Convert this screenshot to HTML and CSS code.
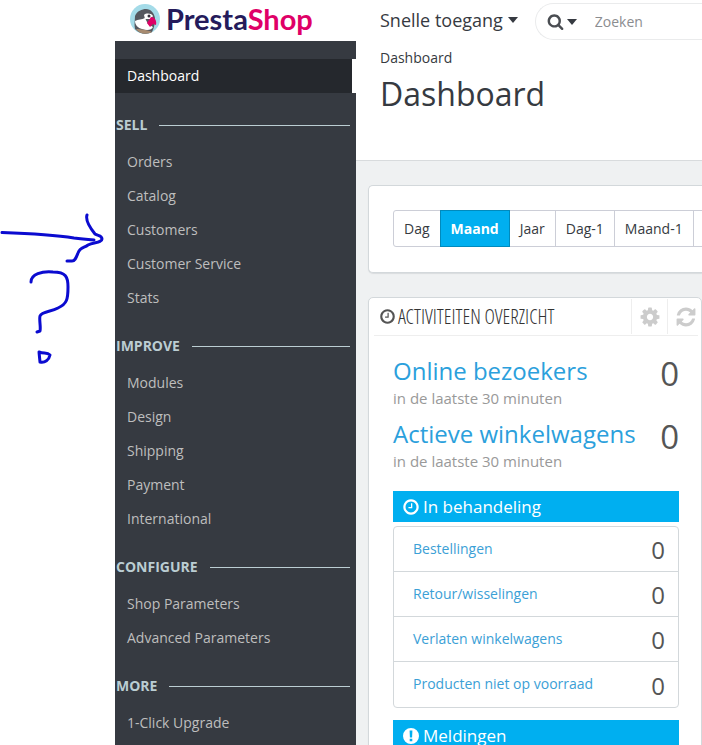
FILE: index.html
```html
<!DOCTYPE html>
<html lang="nl">
<head>
    <meta charset="UTF-8">
    <meta name="viewport" content="width=device-width, initial-scale=1.0">
    <title>Dashboard - PrestaShop</title>
    <link rel="stylesheet" href="styles.css">
</head>
<body>
    <!-- Pen notes next to the menu -->
    <aside class="notes">
        <svg class="pen" width="115" height="160" viewBox="0 210 115 160" aria-hidden="true">
            <path d="M2 232.500C30 233.500 55 235 74 238C82 239 88 239.500 94 240"/>
            <path d="M87 215C85 221 91 229 95 234C98 236 102 235 102 239C102 243 93 242 88 245C84 248 80 247 78 253C76 258 75 261 72 261H67"/>
            <path d="M31 282C31 274 42 271 53 272C66 272 68 277 68 287C68 299 67 304 58 308C51 312 42 311 40 316C39 320 41 327 40 331L37 332"/>
            <path d="M39 352L40 362C45 363 49 360 50 355C47 352 44 354 39 352"/>
        </svg>
    </aside>

    <nav class="sidebar">
        <a class="logo" href="#">
            <svg width="30" height="30" viewBox="0 0 30 30" aria-hidden="true">
                <circle cx="15" cy="15" r="15" fill="#a4dbe8"/>
                <path d="M5 25C4 20 5 16 5 12C7 7 12 5 16 5C21 5 24 9 25 14C25 20 24 24 22 28C17 31 9 30 5 25Z" fill="#55585f"/>
                <path d="M5 17C8 15 12 16 15 14L18 20L23 23C22 26 17 27 12 25C8 24 5 21 5 17Z" fill="#fff"/>
                <path d="M14 11C16 9 21 9 23 12L21 15L15 15Z" fill="#fff"/>
                <circle cx="19" cy="12" r="1.500" fill="#35303c"/>
                <path d="M21 13C25 13 27 17 26 21L23 20L20 23L17 19Z" fill="#df0067"/>
                <path d="M6 25C11 25 18 26 22 28C17 31 9 30 6 25Z" fill="#a78b70"/>
            </svg>
            <span class="logo-text">Presta<span class="logo-shop">Shop</span></span>
        </a>

        <div class="menu">
            <a class="menu-item active" href="#">Dashboard</a>

            <h2 class="menu-title">SELL</h2>
            <a class="menu-item" href="#">Orders</a>
            <a class="menu-item" href="#">Catalog</a>
            <a class="menu-item" href="#">Customers</a>
            <a class="menu-item" href="#">Customer Service</a>
            <a class="menu-item" href="#">Stats</a>

            <h2 class="menu-title">IMPROVE</h2>
            <a class="menu-item" href="#">Modules</a>
            <a class="menu-item" href="#">Design</a>
            <a class="menu-item" href="#">Shipping</a>
            <a class="menu-item" href="#">Payment</a>
            <a class="menu-item" href="#">International</a>

            <h2 class="menu-title">CONFIGURE</h2>
            <a class="menu-item" href="#">Shop Parameters</a>
            <a class="menu-item" href="#">Advanced Parameters</a>

            <h2 class="menu-title">MORE</h2>
            <a class="menu-item" href="#">1-Click Upgrade</a>
        </div>
    </nav>

    <main class="main">
        <header class="header">
            <div class="topbar">
                <button class="quick" type="button">Snelle toegang <span class="caret"></span></button>
                <form class="search">
                    <button class="search-type" type="button" aria-label="Zoeken in">
                        <svg width="17" height="17" viewBox="0 0 1792 1792"><path d="M1216 832q0-185-131.500-316.500t-316.500-131.500-316.500 131.500-131.500 316.500 131.500 316.500 316.500 131.500 316.500-131.500 131.500-316.500zm512 832q0 52-38 90t-90 38q-54 0-90-38l-343-342q-179 124-399 124-143 0-273.500-55.500t-225-150-150-225-55.500-273.500 55.500-273.500 150-225 225-150 273.500-55.500 273.500 55.500 225 150 150 225 55.500 273.500q0 220-124 399l343 343q37 37 37 90z"/></svg>
                        <span class="caret"></span>
                    </button>
                    <input class="search-input" type="text" placeholder="Zoeken" aria-label="Zoeken">
                </form>
            </div>
            <div class="breadcrumb">Dashboard</div>
            <h1 class="page-title">Dashboard</h1>
        </header>

        <div class="content">
            <section class="panel calendar">
                <div class="btn-group">
                    <button class="btn" type="button">Dag</button>
                    <button class="btn selected" type="button">Maand</button>
                    <button class="btn" type="button">Jaar</button>
                    <button class="btn" type="button">Dag-1</button>
                    <button class="btn" type="button">Maand-1</button>
                    <span class="btn-rest"></span>
                </div>
            </section>

            <section class="panel activity">
                <div class="panel-heading">
                    <svg class="icon" width="17" height="17" viewBox="0 0 1792 1792"><path d="M1024 544v448q0 14-9 23t-23 9h-320q-14 0-23-9t-9-23v-64q0-14 9-23t23-9h224v-352q0-14 9-23t23-9h64q14 0 23 9t9 23zm416 352q0-148-73-273t-198-198-273-73-273 73-198 198-73 273 73 273 198 198 273 73 273-73 198-198 73-273zm224 0q0 209-103 385.500t-279.500 279.500-385.500 103-385.500-103-279.500-279.500-103-385.500 103-385.500 279.500-279.500 385.500-103 385.500 103 279.500 279.500 103 385.500z"/></svg>
                    <h3>ACTIVITEITEN OVERZICHT</h3>
                    <button class="tool" type="button" aria-label="Instellingen">
                        <svg width="22" height="22" viewBox="0 0 1792 1792"><path d="M1152 896q0-106-75-181t-181-75-181 75-75 181 75 181 181 75 181-75 75-181zm512-109v222q0 12-8 23t-20 13l-185 28q-19 54-39 91 35 50 107 138 10 12 10 25t-9 23q-27 37-99 108t-94 71q-12 0-26-9l-138-108q-44 23-91 38-16 136-29 186-7 28-36 28h-222q-14 0-24.500-8.500t-11.500-21.500l-28-184q-49-16-90-37l-141 107q-10 9-25 9-14 0-25-11-126-114-165-168-7-10-7-23 0-12 8-23 15-21 51-66.500t54-70.500q-27-50-41-99l-183-27q-13-2-21-12.500t-8-23.500v-222q0-12 8-23t19-13l186-28q14-46 39-92-40-57-107-138-10-12-10-24 0-10 9-23 26-36 98.500-107.500t94.500-71.500q13 0 26 10l138 107q44-23 91-38 16-136 29-186 7-28 36-28h222q14 0 24.500 8.500t11.500 21.500l28 184q49 16 90 37l142-107q9-9 24-9 13 0 25 10 129 119 165 170 7 8 7 22 0 12-8 23-15 21-51 66.500t-54 70.500q26 50 41 98l183 28q13 2 21 12.500t8 23.500z"/></svg>
                    </button>
                    <button class="tool" type="button" aria-label="Vernieuwen">
                        <svg width="22" height="22" viewBox="0 0 1792 1792"><path d="M1639 1056q0 5-1 7-64 268-268 434.500t-478 166.500q-146 0-282.500-55t-243.500-157l-129 129q-19 19-45 19t-45-19-19-45v-448q0-26 19-45t45-19h448q26 0 45 19t19 45-19 45l-137 137q71 66 161 102t187 36q134 0 250-65t186-179q11-17 53-117 8-23 30-23h192q13 0 22.500 9.500t9.500 22.500zm25-800v448q0 26-19 45t-45 19h-448q-26 0-45-19t-19-45 19-45l138-138q-148-137-349-137-134 0-250 65t-186 179q-11 17-53 117-8 23-30 23h-199q-13 0-22.500-9.500t-9.500-22.500v-7q65-268 270-434.500t480-166.500q146 0 284 55.500t245 156.500l130-129q19-19 45-19t45 19 19 45z"/></svg>
                    </button>
                </div>

                <div class="panel-body">
                    <div class="stat">
                        <div>
                            <a class="stat-label" href="#">Online bezoekers</a>
                            <small>in de laatste 30 minuten</small>
                        </div>
                        <span class="stat-value">0</span>
                    </div>
                    <div class="stat">
                        <div>
                            <a class="stat-label" href="#">Actieve winkelwagens</a>
                            <small>in de laatste 30 minuten</small>
                        </div>
                        <span class="stat-value">0</span>
                    </div>

                    <h4 class="list-title">
                        <svg class="icon" width="18" height="18" viewBox="0 0 1792 1792"><path d="M1024 544v448q0 14-9 23t-23 9h-320q-14 0-23-9t-9-23v-64q0-14 9-23t23-9h224v-352q0-14 9-23t23-9h64q14 0 23 9t9 23zm416 352q0-148-73-273t-198-198-273-73-273 73-198 198-73 273 73 273 198 198 273 73 273-73 198-198 73-273zm224 0q0 209-103 385.500t-279.500 279.500-385.500 103-385.500-103-279.500-279.500-103-385.500 103-385.500 279.500-279.500 385.500-103 385.500 103 279.500 279.500 103 385.500z"/></svg>
                        In behandeling
                    </h4>
                    <ul class="list">
                        <li><a href="#">Bestellingen</a><span>0</span></li>
                        <li><a href="#">Retour/wisselingen</a><span>0</span></li>
                        <li><a href="#">Verlaten winkelwagens</a><span>0</span></li>
                        <li><a href="#">Producten niet op voorraad</a><span>0</span></li>
                    </ul>

                    <h4 class="list-title">
                        <svg class="icon" width="18" height="18" viewBox="0 0 18 18"><path fill-rule="evenodd" d="M9 1a8 8 0 1 0 0 16a8 8 0 1 0 0-16zM7.600 3.600h2.800l-.3 6.800H7.900zM7.700 11.800h2.600v2.500H7.700z"/></svg>
                        Meldingen
                    </h4>
                </div>
            </section>
        </div>
    </main>
</body>
</html>
```
FILE: styles.css
```css
* {
    box-sizing: border-box;
}
body {
    display: flex;
    height: 100vh;
    margin: 0;
    overflow: hidden;
    background: white;
    font-family: "Open Sans", "Noto Sans", sans-serif;
    font-size: 14px;
    color: #363a41;
}
h1, h2, h3, h4, ul {
    margin: 0;
    padding: 0;
    font-weight: 400;
}
a {
    text-decoration: none;
}
button {
    font-family: inherit;
    color: inherit;
    background: none;
    border: none;
    padding: 0;
    cursor: pointer;
}
svg {
    display: block;
    flex: none;
    fill: currentColor;
}

/* Pen notes */
.notes {
    flex: none;
    padding-top: 210px;
}
.pen {
    fill: none;
    stroke: #0b0bd0;
    stroke-width: 3;
    stroke-linecap: round;
    stroke-linejoin: round;
}

/* Sidebar */
.sidebar {
    display: flex;
    flex: none;
    flex-direction: column;
    width: 241px;
}
.logo {
    display: flex;
    flex: none;
    align-items: center;
    gap: 6px;
    height: 41px;
    padding: 0 0 4px 15px;
}
.logo-text {
    font-family: Lato, sans-serif;
    font-size: 29px;
    font-weight: 700;
    line-height: 36px;
    color: #251b5b;
}
.logo-shop {
    color: #df0067;
}
.menu {
    flex: 1;
    padding-top: 18px;
    background: #363a41;
}
.menu-item {
    display: block;
    padding-left: 12px;
    line-height: 34px;
    color: #bebebe;
}
.menu-item.active {
    margin-bottom: 22px;
    border-right: 4px solid white;
    background: #25282d;
    color: white;
}
.menu-title {
    display: flex;
    align-items: center;
    gap: 12px;
    margin: 21px 6px 10px 1px;
    font-size: 14px;
    font-weight: 700;
    line-height: 20px;
    color: #bbcdd2;
}
.menu-title::after {
    content: "";
    flex: 1;
    height: 1px;
    background: #bbcdd2;
}

/* Header */
.main {
    flex: 1;
    min-width: 0;
    overflow: hidden;
    background: #eff1f2;
}
.header {
    height: 161px;
    padding: 3px 0 0 24px;
    border-bottom: 1px solid #d8dbdd;
    background: white;
}
.topbar {
    display: flex;
    gap: 17px;
}
.quick {
    display: flex;
    flex: none;
    align-items: center;
    gap: 5px;
    height: 33px;
    font-size: 18px;
}
.caret {
    border: 5px solid transparent;
    border-top: 6px solid #363a41;
    border-bottom: 0;
}
.search {
    display: flex;
    flex: 1;
    align-items: center;
    gap: 18px;
    min-width: 0;
    height: 37px;
    padding-left: 11px;
    border: 1px solid #eaebec;
    border-right: 0;
    border-radius: 19px 0 0 19px;
}
.search-type {
    display: flex;
    align-items: center;
    gap: 3px;
    color: #4a4d52;
}
.search-input {
    flex: 1;
    min-width: 0;
    padding: 0;
    border: none;
    outline: none;
    background: none;
    font: inherit;
}
.search-input::placeholder {
    color: #8b8d90;
}
.breadcrumb {
    padding-top: 8px;
    line-height: 20px;
}
.page-title {
    padding-top: 4px;
    font-size: 32px;
    line-height: 44px;
}

/* Panels */
.content {
    padding: 24px 0 0 12px;
}
.panel {
    margin-bottom: 24px;
    border: 1px solid #d3d8db;
    border-radius: 5px;
    background: white;
    box-shadow: 0 1px 1px #d9dcde;
}
.calendar {
    padding: 24px 0 25px 24px;
    border-right: 0;
    border-radius: 5px 0 0 5px;
    overflow: hidden;
}
.btn-group {
    display: flex;
}
.btn {
    flex: none;
    height: 37px;
    margin-left: -1px;
    padding: 0 10px;
    border: 1px solid #ccced7;
    background: white;
    font-size: 14px;
}
.btn:first-child {
    margin-left: 0;
    border-radius: 3px 0 0 3px;
}
.btn.selected {
    position: relative;
    border-color: #008abd;
    background: #00aff0;
    font-weight: 700;
    color: white;
}
.btn-rest {
    flex: 1;
    border: 1px solid #ccced7;
    border-width: 1px 0;
}
.panel-heading {
    display: flex;
    align-items: center;
    height: 38px;
    margin: 0 3px 0 5px;
    padding-left: 5px;
    border-bottom: 1px solid #eee;
    color: #555;
}
.panel-heading h3 {
    flex: 1;
    padding-left: 2px;
    font-family: "Open Sans Condensed Light", "Liberation Sans Narrow", sans-serif;
    font-size: 20px;
    line-height: 24px;
    color: #333;
    white-space: nowrap;
}
.tool {
    display: flex;
    align-items: center;
    justify-content: center;
    width: 36px;
    height: 35px;
    border-left: 1px solid #eee;
    color: #ccc;
}
.tool:last-child {
    width: 31px;
    padding-left: 5px;
}
.panel-body {
    padding: 18px 22px 24px 24px;
}
.stat {
    display: flex;
    justify-content: space-between;
    height: 63px;
}
.stat-label {
    display: block;
    font-size: 24px;
    line-height: 34px;
    color: #2ba0dc;
    white-space: nowrap;
}
.stat small {
    display: block;
    font-size: 15px;
    line-height: 20px;
    color: #999;
}
.stat-value {
    font-size: 33px;
    line-height: 40px;
    color: #555;
}
.list-title {
    display: flex;
    align-items: center;
    gap: 3px;
    height: 31px;
    margin-top: 11px;
    padding-left: 9px;
    background: #00aff0;
    font-size: 17px;
    color: white;
}
.list {
    margin: 4px 0 12px;
    border: 1px solid #d3d8db;
    border-radius: 4px;
    list-style: none;
}
.list li {
    display: flex;
    align-items: center;
    justify-content: space-between;
    height: 45px;
    padding: 0 13px 2px 19px;
    border-bottom: 1px solid #d3d8db;
}
.list li:last-child {
    border-bottom: none;
}
.list a {
    color: #3ba0d6;
}
.list span {
    padding-top: 4px;
    font-size: 24px;
    line-height: 32px;
    color: #555;
}
```
